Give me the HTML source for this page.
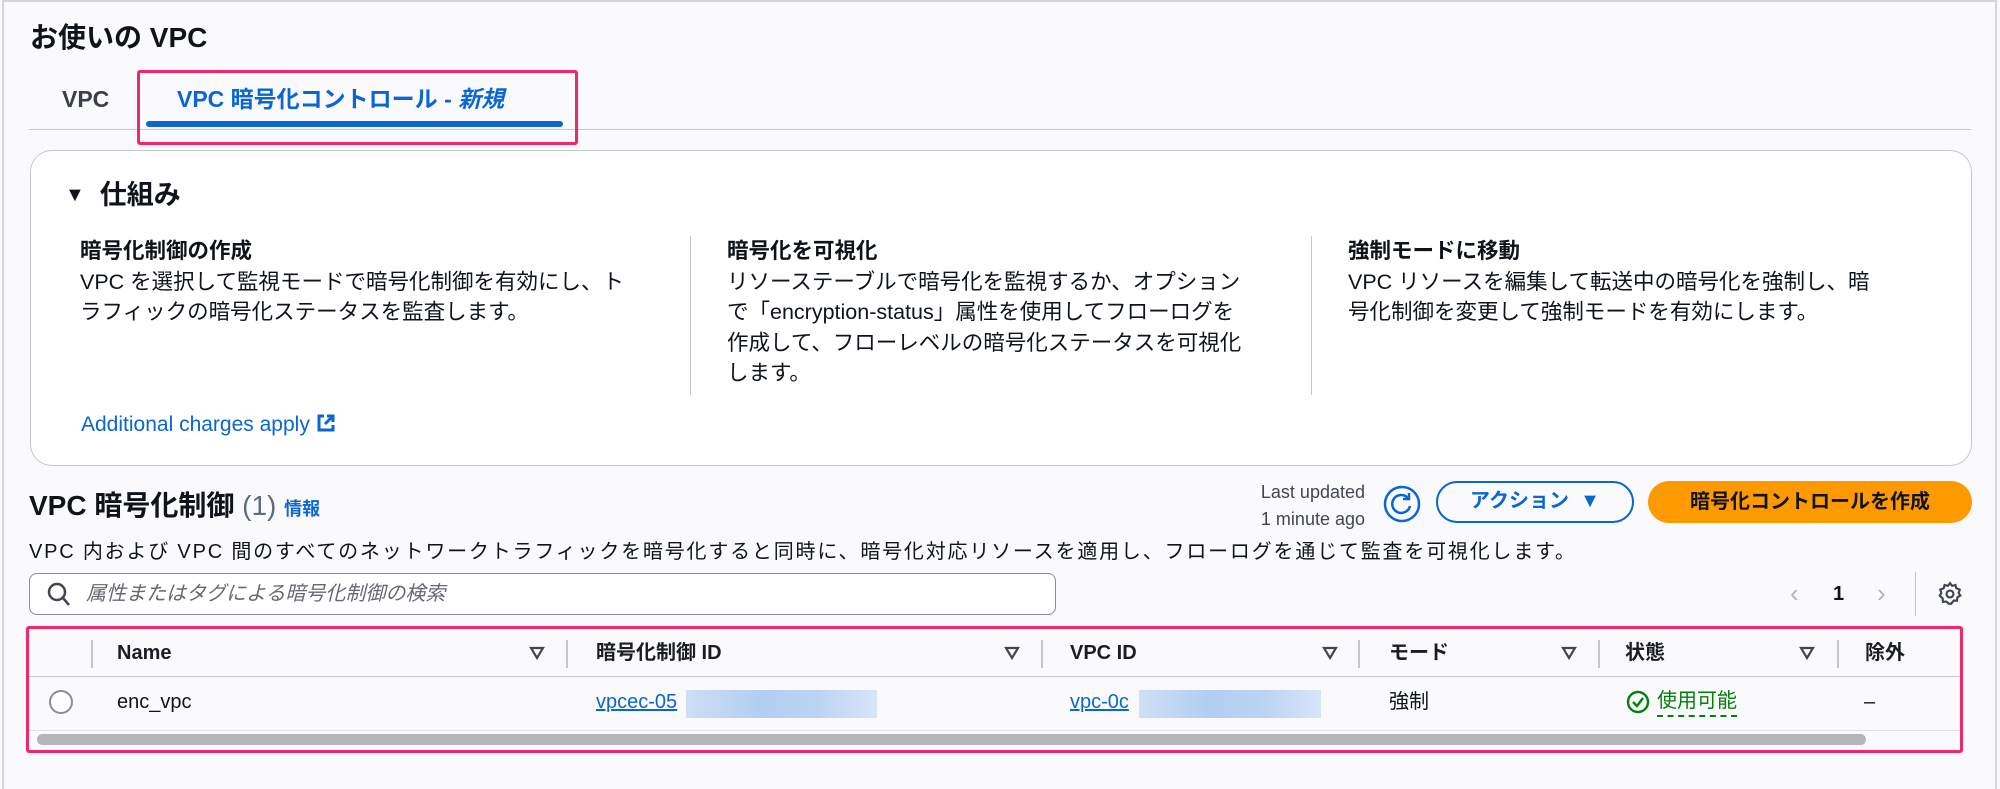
<!DOCTYPE html>
<html><head><meta charset="utf-8"><style>
*{box-sizing:border-box;margin:0;padding:0}
body{width:2000px;height:789px;background:#fafafc;font-family:"Liberation Sans","Noto Sans CJK JP",sans-serif;color:#0f141a;position:relative;overflow:hidden}
.a{position:absolute;white-space:nowrap}
.b{font-weight:bold}
.link{color:#0a66d0}
</style></head><body>
<div class="a" style="left:2px;top:0;width:1995px;height:789px;border-left:2px solid #d5d5da;border-top:2px solid #d5d5da;border-right:2px solid #d5d5da"></div>
<div class="a b" style="left:30px;top:18px;font-size:28px;line-height:40px">お使いの VPC</div>
<div class="a b" style="left:62px;top:82px;font-size:23px;line-height:34px;color:#3b3f48">VPC</div>
<div class="a b" style="left:177px;top:82px;font-size:23px;line-height:34px;color:#0a66d0">VPC 暗号化コントロール - <i>新規</i></div>
<div class="a" style="left:29px;top:129px;width:1942px;height:1px;background:#c6c6cd"></div>
<div class="a" style="left:146px;top:121px;width:417px;height:6px;border-radius:3px;background:#0a66d0"></div>
<div class="a" style="left:137px;top:70px;width:441px;height:75px;border:3px solid #f0286a;border-radius:3px"></div>

<div class="a" style="left:30px;top:150px;width:1942px;height:316px;background:#fff;border:1px solid #c6c6cd;border-radius:22px"></div>
<div class="a b" style="left:65px;top:176px;font-size:27px;line-height:38px"><span style="font-size:20px;position:relative;top:-3px">▼</span>&nbsp; 仕組み</div>

<div class="a" style="left:80px;top:236px;font-size:21.5px;line-height:30.6px">
<div class="b">暗号化制御の作成</div>VPC を選択して監視モードで暗号化制御を有効にし、ト<br>ラフィックの暗号化ステータスを監査します。</div>
<div class="a" style="left:690px;top:236px;width:1px;height:159px;background:#c6c6cd"></div>
<div class="a" style="left:727px;top:236px;font-size:21.5px;line-height:30.6px">
<div class="b">暗号化を可視化</div>リソーステーブルで暗号化を監視するか、オプション<br>で「encryption-status」属性を使用してフローログを<br>作成して、フローレベルの暗号化ステータスを可視化<br>します。</div>
<div class="a" style="left:1311px;top:236px;width:1px;height:159px;background:#c6c6cd"></div>
<div class="a" style="left:1348px;top:236px;font-size:21.5px;line-height:30.6px">
<div class="b">強制モードに移動</div>VPC リソースを編集して転送中の暗号化を強制し、暗<br>号化制御を変更して強制モードを有効にします。</div>
<div class="a link" style="left:81px;top:410px;font-size:21px;line-height:30px">Additional charges apply <svg width="20" height="20" viewBox="0 0 20 20" style="vertical-align:-2px"><path d="M8 3H3v14h14v-5M11 3h6v6M17 3 9 11" fill="none" stroke="#0a66d0" stroke-width="3"/></svg></div>

<div class="a b" style="left:29px;top:486px;font-size:28px;line-height:40px">VPC 暗号化制御 <span style="font-weight:normal;color:#5f6b7a">(1)</span> <span class="link" style="font-size:18px">情報</span></div>
<div class="a" style="left:1241px;top:479px;width:124px;text-align:right;font-size:18px;line-height:27px;color:#424650">Last updated<br>1 minute ago</div>
<svg class="a" style="left:1383px;top:485px" width="38" height="38" viewBox="0 0 38 38"><circle cx="19" cy="19" r="17" fill="none" stroke="#0a66d0" stroke-width="2.5"/><path d="M25 13a9 9 0 1 0 2 8" fill="none" stroke="#0a66d0" stroke-width="2.5"/><path d="M26 8v6h-6" fill="none" stroke="#0a66d0" stroke-width="2.5"/></svg>
<div class="a b link" style="left:1436px;top:481px;width:198px;height:42px;border:2.5px solid #0a66d0;border-radius:21px;font-size:20px;line-height:37px;text-align:center">アクション &nbsp;▼</div>
<div class="a b" style="left:1648px;top:481px;width:324px;height:42px;background:#ff9900;border-radius:21px;font-size:20px;line-height:42px;text-align:center;color:#0f141a">暗号化コントロールを作成</div>
<div class="a" style="left:29px;top:537px;font-size:20px;line-height:30px;letter-spacing:1.8px">VPC 内および VPC 間のすべてのネットワークトラフィックを暗号化すると同時に、暗号化対応リソースを適用し、フローログを通じて監査を可視化します。</div>

<div class="a" style="left:29px;top:573px;width:1027px;height:42px;background:#fff;border:1.5px solid #8c8c94;border-radius:8px"></div>
<svg class="a" style="left:47px;top:582px" width="24" height="26" viewBox="0 0 24 26"><circle cx="10" cy="10" r="8" fill="none" stroke="#424650" stroke-width="2.5"/><path d="M16 16l6 7" stroke="#424650" stroke-width="2.5"/></svg>
<div class="a" style="left:86px;top:579px;font-size:20px;line-height:30px;color:#656871;font-style:italic">属性またはタグによる暗号化制御の検索</div>
<div class="a" style="left:1790px;top:578px;font-size:26px;line-height:30px;color:#b4b4bb">‹</div>
<div class="a b" style="left:1833px;top:579px;font-size:20px;line-height:30px">1</div>
<div class="a" style="left:1877px;top:578px;font-size:26px;line-height:30px;color:#b4b4bb">›</div>
<div class="a" style="left:1915px;top:572px;width:1px;height:44px;background:#c6c6cd"></div>
<svg class="a" style="left:1937px;top:581px" width="26" height="26" viewBox="0 0 24 24"><path d="M12 2l2 2.5 3-.8.8 3L21 8l-1 3 1.5 2.5-2.7 1.5-.3 3.2-3-.2L13 21h-2l-2.5-2-3 .2-.3-3.2L2.5 13.5 4 11 3 8l3.2-1.3.8-3 3 .8z" fill="none" stroke="#424650" stroke-width="2"/><circle cx="12" cy="12" r="3.2" fill="none" stroke="#424650" stroke-width="2"/></svg>

<div class="a" style="left:26px;top:626px;width:1937px;height:127px;border:3px solid #f0286a;border-radius:3px"></div>
<div class="a" style="left:29px;top:676px;width:1931px;height:1px;background:#c6c6cd"></div>
<div class="a" style="left:29px;top:730px;width:1931px;height:1px;background:#e1e1e6"></div>
<div class="a" style="left:91px;top:640px;width:2px;height:28px;background:#c6c6cd"></div>
<div class="a" style="left:566px;top:640px;width:2px;height:28px;background:#c6c6cd"></div>
<div class="a" style="left:1041px;top:640px;width:2px;height:28px;background:#c6c6cd"></div>
<div class="a" style="left:1358px;top:640px;width:2px;height:28px;background:#c6c6cd"></div>
<div class="a" style="left:1598px;top:640px;width:2px;height:28px;background:#c6c6cd"></div>
<div class="a" style="left:1837px;top:640px;width:2px;height:28px;background:#c6c6cd"></div>
<div class="a b" style="left:117px;top:638px;font-size:20px;line-height:30px;color:#1a1d23">Name</div>
<div class="a b" style="left:596px;top:638px;font-size:20px;line-height:30px;color:#1a1d23">暗号化制御 ID</div>
<div class="a b" style="left:1070px;top:638px;font-size:20px;line-height:30px;color:#1a1d23">VPC ID</div>
<div class="a b" style="left:1389px;top:638px;font-size:20px;line-height:30px;color:#1a1d23">モード</div>
<div class="a b" style="left:1625px;top:638px;font-size:20px;line-height:30px;color:#1a1d23">状態</div>
<div class="a b" style="left:1865px;top:638px;font-size:20px;line-height:30px;color:#1a1d23">除外</div>
<svg class="a" style="left:529px;top:646px" width="16" height="14" viewBox="0 0 16 14"><path d="M2 2h12L8 12z" fill="none" stroke="#424650" stroke-width="2.2"/></svg>
<svg class="a" style="left:1004px;top:646px" width="16" height="14" viewBox="0 0 16 14"><path d="M2 2h12L8 12z" fill="none" stroke="#424650" stroke-width="2.2"/></svg>
<svg class="a" style="left:1322px;top:646px" width="16" height="14" viewBox="0 0 16 14"><path d="M2 2h12L8 12z" fill="none" stroke="#424650" stroke-width="2.2"/></svg>
<svg class="a" style="left:1561px;top:646px" width="16" height="14" viewBox="0 0 16 14"><path d="M2 2h12L8 12z" fill="none" stroke="#424650" stroke-width="2.2"/></svg>
<svg class="a" style="left:1799px;top:646px" width="16" height="14" viewBox="0 0 16 14"><path d="M2 2h12L8 12z" fill="none" stroke="#424650" stroke-width="2.2"/></svg>

<div class="a" style="left:49px;top:690px;width:24px;height:24px;border:2px solid #8c8c94;border-radius:50%;background:#fff"></div>
<div class="a" style="left:117px;top:687px;font-size:20px;line-height:30px">enc_vpc</div>
<div class="a link" style="left:596px;top:687px;font-size:20px;line-height:30px;text-decoration:underline">vpcec-05</div>
<div class="a" style="left:686px;top:690px;width:191px;height:28px;background:linear-gradient(90deg,#c9dcf5,#a9c8f0 40%,#b5d0f3 70%,#d3e3f8);opacity:.9"></div>
<div class="a link" style="left:1070px;top:687px;font-size:20px;line-height:30px;text-decoration:underline">vpc-0c</div>
<div class="a" style="left:1139px;top:690px;width:182px;height:28px;background:linear-gradient(90deg,#c9dcf5,#a9c8f0 40%,#b5d0f3 70%,#d3e3f8);opacity:.9"></div>
<div class="a" style="left:1389px;top:687px;font-size:20px;line-height:30px">強制</div>
<svg class="a" style="left:1626px;top:690px" width="24" height="24" viewBox="0 0 24 24"><circle cx="12" cy="12" r="10" fill="none" stroke="#037f0c" stroke-width="2.4"/><path d="M7 12l4 4 6-8" fill="none" stroke="#037f0c" stroke-width="2.4"/></svg>
<div class="a" style="left:1657px;top:687px;font-size:20px;line-height:28px;color:#037f0c;border-bottom:2px dashed #037f0c">使用可能</div>
<div class="a" style="left:1864px;top:687px;font-size:20px;line-height:30px">–</div>
<div class="a" style="left:37px;top:734px;width:1829px;height:11px;background:#b5b5b8;border-radius:6px"></div>
</body></html>
